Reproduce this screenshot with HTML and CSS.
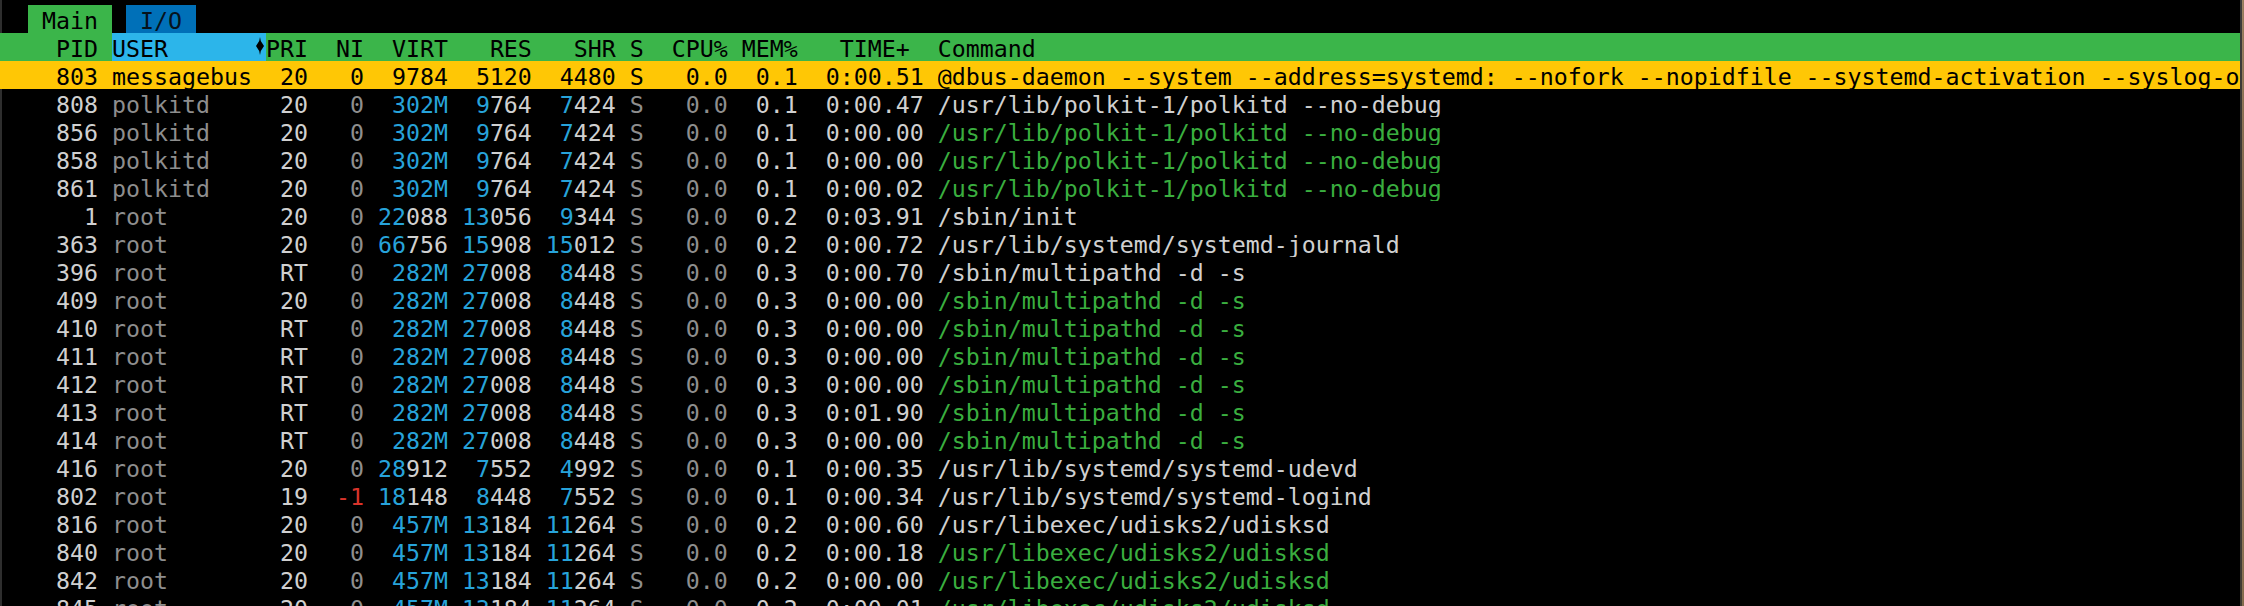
FILE: index.html
```html
<!DOCTYPE html>
<html lang="en">
<head>
<meta charset="utf-8">
<title>htop</title>
<link rel="stylesheet" href="styles.css">
</head>
<body>
<div class="screen">
  <div class="tabs"><span class="tab tab-main">Main</span><span class="tab tab-io">I/O</span></div>

  <div class="row head">
    <span class="pid">PID</span>
    <span class="user sorted"><span>USER</span><svg class="sort" width="14" height="18" viewBox="0 0 14 18"><polygon points="8,0 8.8,4 12,9 8.8,14 8,18 7.2,14 4,9 7.2,4" fill="#000"/></svg></span>
    <span class="pri">PRI</span><span class="ni">NI</span><span class="virt">VIRT</span><span class="res">RES</span><span class="shr">SHR</span><span class="st">S</span><span class="cpu">CPU%</span><span class="mem">MEM%</span><span class="time">TIME+</span><span class="cmd">Command</span>
  </div>

  <div class="row sel">
    <span class="pid">803</span><span class="user">messagebus</span><span class="pri">20</span><span class="ni">0</span><span class="virt">9784</span><span class="res">5120</span><span class="shr">4480</span><span class="st">S</span><span class="cpu">0.0</span><span class="mem">0.1</span><span class="time">0:00.51</span><span class="cmd">@dbus-daemon --system --address=systemd: --nofork --nopidfile --systemd-activation --syslog-only</span>
  </div>

  <div class="row">
    <span class="pid">808</span><span class="user dim">polkitd</span><span class="pri">20</span><span class="ni dim">0</span><span class="virt mb">302M</span><span class="res"><span class="mb">9</span>764</span><span class="shr"><span class="mb">7</span>424</span><span class="st dim">S</span><span class="cpu dim">0.0</span><span class="mem">0.1</span><span class="time">0:00.47</span><span class="cmd">/usr/lib/polkit-1/polkitd --no-debug</span>
  </div>
  <div class="row">
    <span class="pid">856</span><span class="user dim">polkitd</span><span class="pri">20</span><span class="ni dim">0</span><span class="virt mb">302M</span><span class="res"><span class="mb">9</span>764</span><span class="shr"><span class="mb">7</span>424</span><span class="st dim">S</span><span class="cpu dim">0.0</span><span class="mem">0.1</span><span class="time">0:00.00</span><span class="cmd thr">/usr/lib/polkit-1/polkitd --no-debug</span>
  </div>
  <div class="row">
    <span class="pid">858</span><span class="user dim">polkitd</span><span class="pri">20</span><span class="ni dim">0</span><span class="virt mb">302M</span><span class="res"><span class="mb">9</span>764</span><span class="shr"><span class="mb">7</span>424</span><span class="st dim">S</span><span class="cpu dim">0.0</span><span class="mem">0.1</span><span class="time">0:00.00</span><span class="cmd thr">/usr/lib/polkit-1/polkitd --no-debug</span>
  </div>
  <div class="row">
    <span class="pid">861</span><span class="user dim">polkitd</span><span class="pri">20</span><span class="ni dim">0</span><span class="virt mb">302M</span><span class="res"><span class="mb">9</span>764</span><span class="shr"><span class="mb">7</span>424</span><span class="st dim">S</span><span class="cpu dim">0.0</span><span class="mem">0.1</span><span class="time">0:00.02</span><span class="cmd thr">/usr/lib/polkit-1/polkitd --no-debug</span>
  </div>
  <div class="row">
    <span class="pid">1</span><span class="user dim">root</span><span class="pri">20</span><span class="ni dim">0</span><span class="virt"><span class="mb">22</span>088</span><span class="res"><span class="mb">13</span>056</span><span class="shr"><span class="mb">9</span>344</span><span class="st dim">S</span><span class="cpu dim">0.0</span><span class="mem">0.2</span><span class="time">0:03.91</span><span class="cmd">/sbin/init</span>
  </div>
  <div class="row">
    <span class="pid">363</span><span class="user dim">root</span><span class="pri">20</span><span class="ni dim">0</span><span class="virt"><span class="mb">66</span>756</span><span class="res"><span class="mb">15</span>908</span><span class="shr"><span class="mb">15</span>012</span><span class="st dim">S</span><span class="cpu dim">0.0</span><span class="mem">0.2</span><span class="time">0:00.72</span><span class="cmd">/usr/lib/systemd/systemd-journald</span>
  </div>
  <div class="row">
    <span class="pid">396</span><span class="user dim">root</span><span class="pri">RT</span><span class="ni dim">0</span><span class="virt mb">282M</span><span class="res"><span class="mb">27</span>008</span><span class="shr"><span class="mb">8</span>448</span><span class="st dim">S</span><span class="cpu dim">0.0</span><span class="mem">0.3</span><span class="time">0:00.70</span><span class="cmd">/sbin/multipathd -d -s</span>
  </div>
  <div class="row">
    <span class="pid">409</span><span class="user dim">root</span><span class="pri">20</span><span class="ni dim">0</span><span class="virt mb">282M</span><span class="res"><span class="mb">27</span>008</span><span class="shr"><span class="mb">8</span>448</span><span class="st dim">S</span><span class="cpu dim">0.0</span><span class="mem">0.3</span><span class="time">0:00.00</span><span class="cmd thr">/sbin/multipathd -d -s</span>
  </div>
  <div class="row">
    <span class="pid">410</span><span class="user dim">root</span><span class="pri">RT</span><span class="ni dim">0</span><span class="virt mb">282M</span><span class="res"><span class="mb">27</span>008</span><span class="shr"><span class="mb">8</span>448</span><span class="st dim">S</span><span class="cpu dim">0.0</span><span class="mem">0.3</span><span class="time">0:00.00</span><span class="cmd thr">/sbin/multipathd -d -s</span>
  </div>
  <div class="row">
    <span class="pid">411</span><span class="user dim">root</span><span class="pri">RT</span><span class="ni dim">0</span><span class="virt mb">282M</span><span class="res"><span class="mb">27</span>008</span><span class="shr"><span class="mb">8</span>448</span><span class="st dim">S</span><span class="cpu dim">0.0</span><span class="mem">0.3</span><span class="time">0:00.00</span><span class="cmd thr">/sbin/multipathd -d -s</span>
  </div>
  <div class="row">
    <span class="pid">412</span><span class="user dim">root</span><span class="pri">RT</span><span class="ni dim">0</span><span class="virt mb">282M</span><span class="res"><span class="mb">27</span>008</span><span class="shr"><span class="mb">8</span>448</span><span class="st dim">S</span><span class="cpu dim">0.0</span><span class="mem">0.3</span><span class="time">0:00.00</span><span class="cmd thr">/sbin/multipathd -d -s</span>
  </div>
  <div class="row">
    <span class="pid">413</span><span class="user dim">root</span><span class="pri">RT</span><span class="ni dim">0</span><span class="virt mb">282M</span><span class="res"><span class="mb">27</span>008</span><span class="shr"><span class="mb">8</span>448</span><span class="st dim">S</span><span class="cpu dim">0.0</span><span class="mem">0.3</span><span class="time">0:01.90</span><span class="cmd thr">/sbin/multipathd -d -s</span>
  </div>
  <div class="row">
    <span class="pid">414</span><span class="user dim">root</span><span class="pri">RT</span><span class="ni dim">0</span><span class="virt mb">282M</span><span class="res"><span class="mb">27</span>008</span><span class="shr"><span class="mb">8</span>448</span><span class="st dim">S</span><span class="cpu dim">0.0</span><span class="mem">0.3</span><span class="time">0:00.00</span><span class="cmd thr">/sbin/multipathd -d -s</span>
  </div>
  <div class="row">
    <span class="pid">416</span><span class="user dim">root</span><span class="pri">20</span><span class="ni dim">0</span><span class="virt"><span class="mb">28</span>912</span><span class="res"><span class="mb">7</span>552</span><span class="shr"><span class="mb">4</span>992</span><span class="st dim">S</span><span class="cpu dim">0.0</span><span class="mem">0.1</span><span class="time">0:00.35</span><span class="cmd">/usr/lib/systemd/systemd-udevd</span>
  </div>
  <div class="row">
    <span class="pid">802</span><span class="user dim">root</span><span class="pri">19</span><span class="ni red">-1</span><span class="virt"><span class="mb">18</span>148</span><span class="res"><span class="mb">8</span>448</span><span class="shr"><span class="mb">7</span>552</span><span class="st dim">S</span><span class="cpu dim">0.0</span><span class="mem">0.1</span><span class="time">0:00.34</span><span class="cmd">/usr/lib/systemd/systemd-logind</span>
  </div>
  <div class="row">
    <span class="pid">816</span><span class="user dim">root</span><span class="pri">20</span><span class="ni dim">0</span><span class="virt mb">457M</span><span class="res"><span class="mb">13</span>184</span><span class="shr"><span class="mb">11</span>264</span><span class="st dim">S</span><span class="cpu dim">0.0</span><span class="mem">0.2</span><span class="time">0:00.60</span><span class="cmd">/usr/libexec/udisks2/udisksd</span>
  </div>
  <div class="row">
    <span class="pid">840</span><span class="user dim">root</span><span class="pri">20</span><span class="ni dim">0</span><span class="virt mb">457M</span><span class="res"><span class="mb">13</span>184</span><span class="shr"><span class="mb">11</span>264</span><span class="st dim">S</span><span class="cpu dim">0.0</span><span class="mem">0.2</span><span class="time">0:00.18</span><span class="cmd thr">/usr/libexec/udisks2/udisksd</span>
  </div>
  <div class="row">
    <span class="pid">842</span><span class="user dim">root</span><span class="pri">20</span><span class="ni dim">0</span><span class="virt mb">457M</span><span class="res"><span class="mb">13</span>184</span><span class="shr"><span class="mb">11</span>264</span><span class="st dim">S</span><span class="cpu dim">0.0</span><span class="mem">0.2</span><span class="time">0:00.00</span><span class="cmd thr">/usr/libexec/udisks2/udisksd</span>
  </div>
  <div class="row">
    <span class="pid">845</span><span class="user dim">root</span><span class="pri">20</span><span class="ni dim">0</span><span class="virt mb">457M</span><span class="res"><span class="mb">13</span>184</span><span class="shr"><span class="mb">11</span>264</span><span class="st dim">S</span><span class="cpu dim">0.0</span><span class="mem">0.2</span><span class="time">0:00.01</span><span class="cmd thr">/usr/libexec/udisks2/udisksd</span>
  </div>
</div>
<div class="edge"></div>
</body>
</html>
```

FILE: styles.css
```css
html, body {
  margin: 0;
  padding: 0;
  background: #000;
}

body {
  width: 2244px;
  height: 606px;
  overflow: hidden;
  display: flex;
  font-family: "DejaVu Sans Mono", "Liberation Mono", monospace;
  font-size: 23.2538px;
  color: #d0d0d0;
}

.screen {
  flex: none;
  width: 2240px;
  height: 606px;
  overflow: hidden;
  padding-top: 5px;
  box-sizing: border-box;
  box-shadow: inset 2px 0 0 #2e2e2e;
}

.edge {
  flex: none;
  width: 4px;
  height: 606px;
  background:
    linear-gradient(to bottom, rgba(0,0,0,0) 0, rgba(60,40,20,0.35) 40%, rgba(0,0,0,0) 70%, rgba(80,60,30,0.3) 100%),
    linear-gradient(to right, #3c3c3c 0, #3c3c3c 2px, #a4896a 2px, #8f7657 4px);
}

/* tab line */
.tabs {
  display: flex;
  height: 28px;
  padding-left: 2ch;
  gap: 1ch;
}

.tab {
  padding: 4px 1ch 0;
  line-height: 24px;
  color: #000;
  white-space: pre;
}

.tab-main {
  background: #3bb54a;
}

.tab-io {
  background: #0070b8;
  color: #06121c;
}

/* process rows */
.row {
  display: grid;
  grid-template-columns: 7ch 12ch 3ch 4ch 6ch 6ch 6ch 2ch 6ch 5ch 9ch 1fr;
  height: 28px;
  white-space: pre;
  overflow: hidden;
}

.row > span {
  padding-top: 4px;
  line-height: 24px;
  text-align: right;
  overflow: hidden;
}

.row > .user,
.row > .cmd {
  margin-left: 1ch;
  text-align: left;
}

.head {
  background: #3bb54a;
  color: #000;
}

.head > .time {
  padding-right: 1ch;
}

.head > .sorted {
  background: #2cb5ea;
  display: flex;
  justify-content: space-between;
  align-items: flex-start;
}

.sort {
  display: block;
  flex: none;
}

.sel {
  background: #ffc705;
  color: #000;
}

.sel span {
  color: inherit;
}

.dim {
  color: #8e8e8e;
}

.mb {
  color: #27a3da;
}

.red {
  color: #d9342b;
}

.thr {
  color: #3aae3f;
}
```
